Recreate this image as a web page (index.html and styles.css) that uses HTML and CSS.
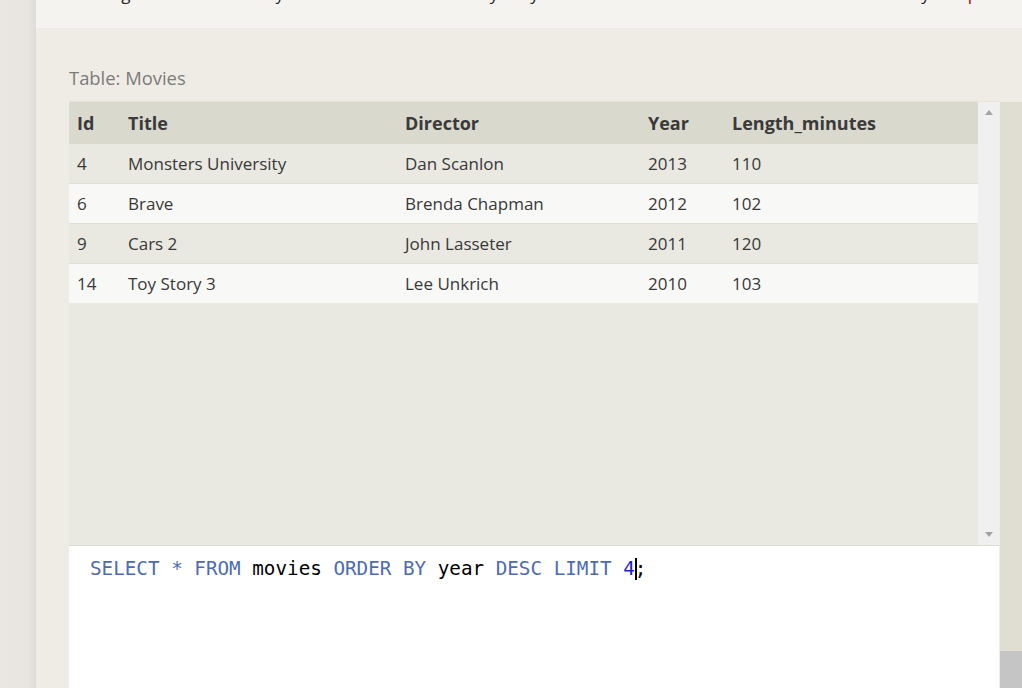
FILE: index.html
```html
<!DOCTYPE html>
<html>
<head>
<meta charset="utf-8">
<link rel="stylesheet" href="styles.css">
</head>
<body>
<div class="sidebar"></div>
<div class="main">
  <div class="topbar">
    <p class="clipped"><span class="w1">Using</span><span class="w2">yours</span><span class="w3">y</span><span class="w4">y</span><span class="w5">by</span><span class="w6">p</span></p>
  </div>
  <div class="content">
    <div class="label">Table: Movies</div>
    <div class="workspace">
      <div class="panel">
        <div class="results">
          <div class="tablewrap">
            <table class="grid">
              <thead>
                <tr><th class="c1">Id</th><th class="c2">Title</th><th class="c3">Director</th><th class="c4">Year</th><th class="c5">Length_minutes</th></tr>
              </thead>
              <tbody>
                <tr><td>4</td><td>Monsters University</td><td>Dan Scanlon</td><td>2013</td><td>110</td></tr>
                <tr><td>6</td><td>Brave</td><td>Brenda Chapman</td><td>2012</td><td>102</td></tr>
                <tr><td>9</td><td>Cars 2</td><td>John Lasseter</td><td>2011</td><td>120</td></tr>
                <tr><td>14</td><td>Toy Story 3</td><td>Lee Unkrich</td><td>2010</td><td>103</td></tr>
              </tbody>
            </table>
          </div>
          <div class="vscroll">
            <span class="arrow up"></span>
            <span class="arrow down"></span>
          </div>
        </div>
        <div class="editor">
          <div class="code"><span class="kw">SELECT</span> <span class="kw">*</span> <span class="kw">FROM</span> movies <span class="kw">ORDER</span> <span class="kw">BY</span> year <span class="kw">DESC</span> <span class="kw">LIMIT</span> <span class="num">4</span><span class="cursor"></span>;</div>
        </div>
      </div>
      <div class="rightcol">
        <div class="thumb"></div>
      </div>
    </div>
  </div>
</div>
</body>
</html>
```
FILE: styles.css
```css
html, body {
  margin: 0;
  padding: 0;
}
body {
  display: flex;
  width: 1022px;
  height: 688px;
  overflow: hidden;
  font-family: "Open Sans", "Noto Sans", sans-serif;
  background: #efece5;
}
.sidebar {
  width: 36px;
  flex: none;
  background: linear-gradient(to right, #ebe8e4 0%, #e7e3df 80%, #dfdbd8 100%);
}
.main {
  flex: 1;
  display: flex;
  flex-direction: column;
  min-width: 0;
}
.topbar {
  height: 28px;
  flex: none;
  background: #f5f3ef;
  overflow: hidden;
}
.clipped {
  margin: -18px 0 0 0;
  font-size: 17px;
  line-height: 24px;
  color: #222;
  white-space: nowrap;
  display: flex;
}
.clipped span { display: inline-block; }
.w1 { margin-left: 50px; }
.w2 { margin-left: 145px; }
.w3 { margin-left: 170px; }
.w4 { margin-left: 32px; }
.w5 { margin-left: 372px; }
.w6 { margin-left: 38px; color: #b00000; }
.content {
  flex: 1;
  padding: 0 0 0 33px;
  display: flex;
  flex-direction: column;
  min-height: 0;
}
.label {
  margin-top: 37px;
  height: 36px;
  font-size: 18.4px;
  line-height: 26px;
  color: #7b7b7b;
}
.workspace {
  flex: 1;
  display: flex;
  min-height: 0;
}
.panel {
  width: 930px;
  flex: none;
  display: flex;
  flex-direction: column;
}
.results {
  height: 443px;
  flex: none;
  display: flex;
  background: #e9e8e1;
  border-top: 1px solid #e4e3dc;
  border-bottom: 1px solid #dcdcd6;
}
.tablewrap {
  flex: 1;
}
.grid {
  width: 909px;
  border-collapse: collapse;
  font-size: 17px;
  color: #333;
}
.grid th {
  height: 42px;
  background: #dad9cd;
  text-align: left;
  font-size: 18px;
  font-weight: 700;
  color: #3a3a3a;
  padding: 0 0 0 8px;
}
.grid td {
  height: 39px;
  padding: 0 0 0 8px;
  border-bottom: 1px solid #deddd6;
  color: #383838;
}
.grid tbody tr:nth-child(odd) td { background: #e9e8e1; }
.grid tbody tr:nth-child(even) td { background: #f8f8f7; }
.grid tbody tr:last-child td { border-bottom: none; }
.c1 { width: 43px; }
.c2 { width: 269px; }
.c3 { width: 235px; }
.c4 { width: 76px; }
.vscroll {
  width: 21px;
  flex: none;
  background: #f0f0f0;
  display: flex;
  flex-direction: column;
  justify-content: space-between;
  align-items: center;
  padding: 8px 0 8px 0;
}
.arrow {
  width: 0;
  height: 0;
  border-left: 4px solid transparent;
  border-right: 4px solid transparent;
}
.arrow.up { border-bottom: 5px solid #a3a3a3; }
.arrow.down { border-top: 5px solid #a3a3a3; }
.editor {
  flex: 1;
  background: #ffffff;
}
.code {
  margin: 11px 0 0 21px;
  font-family: "DejaVu Sans Mono", "Liberation Mono", monospace;
  font-size: 19.25px;
  line-height: 24px;
  color: #000;
  white-space: pre;
}
.kw { color: #4d6bb5; }
.num { color: #2020d0; }
.cursor {
  display: inline-block;
  width: 2px;
  height: 22px;
  margin-right: -2px;
  background: #000;
  vertical-align: -5px;
}
.rightcol {
  width: 22px;
  flex: none;
  margin-left: 1px;
  margin-top: 1px;
  background: #e0ddd2;
  display: flex;
  flex-direction: column;
  justify-content: flex-end;
}
.thumb {
  height: 37px;
  background: #c5c5c5;
}
```
